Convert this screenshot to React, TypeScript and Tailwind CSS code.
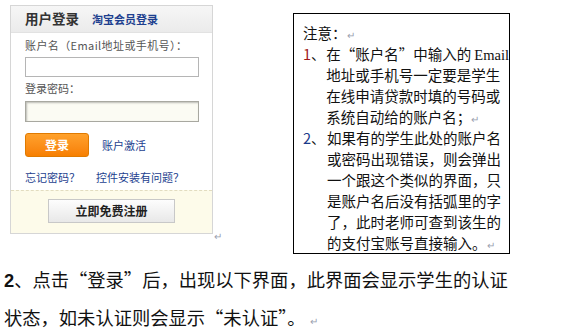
import React from "react";

const cjk = { fontFamily: '"Noto Sans CJK SC", "Noto Sans", sans-serif' };

function Ret({ className = "" }: { className?: string }) {
  return <span className={`text-[10px] leading-none text-gray-400 ${className}`}>↵</span>;
}

function LoginPanel() {
  return (
    <div className="relative w-[203px] h-[229px] border border-[#d6d6d6] bg-white flex flex-col" style={cjk}>
      <div className="h-[27px] flex items-center bg-gradient-to-b from-[#f6f6f6] to-[#ebebeb] border-b border-[#e2e2e2] pl-[14px] gap-[13px]">
        <span className="text-[13.5px] font-bold text-[#333] leading-none">用户登录</span>
        <span className="text-[11px] font-bold text-[#1d3f8f] leading-none">淘宝会员登录</span>
      </div>
      <div className="flex flex-col pl-[14px] pt-[4px]">
        <div className="text-[11px] text-[#555] leading-[16px] tracking-[0.4px]">账户名（Email地址或手机号）：</div>
        <div className="mt-[4px] w-[174px] h-[20px] border border-[#b5b5b5] bg-white" />
        <div className="mt-[3px] text-[11px] text-[#555] leading-[16px]">登录密码：</div>
        <div className="mt-[5px] w-[174px] h-[21px] border border-[#a8a8a0] bg-[#fbfbf3] shadow-[inset_1px_1px_2px_rgba(0,0,0,0.25)]" />
        <div className="mt-[11px] flex items-center">
          <div className="w-[64px] h-[24px] rounded-[3px] border border-[#e07a00] bg-gradient-to-b from-[#ffa12b] to-[#f77f00] flex items-center justify-center">
            <span className="text-[12px] font-bold text-white leading-none">登录</span>
          </div>
          <span className="ml-[13px] text-[11px] text-[#1d3f8f] leading-none">账户激活</span>
        </div>
        <div className="mt-[15px] flex items-center text-[11px] text-[#1d3f8f] leading-none">
          <span>忘记密码？</span>
          <span className="ml-[16px]">控件安装有问题？</span>
        </div>
      </div>
      <div className="mt-[7px] flex-1 border-t border-dashed border-[#e2dcc0] bg-[#fdfbea] flex justify-center pt-[8px]">
        <div className="w-[127px] h-[24px] border border-[#c8c8c8] bg-gradient-to-b from-[#fdfdfd] to-[#e8e8e8] flex items-center justify-center">
          <span className="text-[12px] font-bold text-[#222] leading-none">立即免费注册</span>
        </div>
      </div>
      <Ret className="absolute -right-[10px] -bottom-[8px]" />
    </div>
  );
}

function L({ children }: { children: React.ReactNode }) {
  return <div className="h-[21px] leading-[21px] whitespace-nowrap">{children}</div>;
}

function NoteBox() {
  return (
    <div className="w-[217px] h-[241px] border border-black bg-white pl-[9px] pt-[8px] text-[14.5px] text-[#111]" style={cjk}>
      <L>注意：<Ret /></L>
      <div className="flex">
        <div className="w-[24px]"><L><span className="text-[#a01818]">1</span>、</L></div>
        <div className="flex flex-col">
          <L>在“账户名”中输入的<span style={{ fontFamily: '"Liberation Serif", serif' }} className="ml-[3px] text-[14.5px]">Email</span></L>
          <L>地址或手机号一定要是学生</L>
          <L>在线申请贷款时填的号码或</L>
          <L>系统自动给的账户名；<Ret /></L>
        </div>
      </div>
      <div className="flex">
        <div className="w-[24px]"><L><span className="text-[#1a3a8a]">2</span>、</L></div>
        <div className="flex flex-col">
          <L>如果有的学生此处的账户名</L>
          <L>或密码出现错误，则会弹出</L>
          <L>一个跟这个类似的界面，只</L>
          <L>是账户名后没有括弧里的字</L>
          <L>了，此时老师可查到该生的</L>
          <L>的支付宝账号直接输入。<Ret /></L>
        </div>
      </div>
    </div>
  );
}

export default function App() {
  return (
    <div className="w-[572px] h-[333px] bg-white overflow-hidden">
      <div className="flex">
        <div className="ml-[10px] mt-[5px]">
          <LoginPanel />
        </div>
        <div className="ml-[80px] mt-[13px]">
          <NoteBox />
        </div>
      </div>
      <div className="pl-[4px] mt-[6px] text-[18.3px] leading-[38px] text-[#111]" style={cjk}>
        <div className="h-[38px] whitespace-nowrap"><span className="font-bold" style={{ fontFamily: '"Liberation Sans", sans-serif' }}>2</span>、点击“登录”后，出现以下界面，此界面会显示学生的认证</div>
        <div className="h-[38px] whitespace-nowrap">状态，如未认证则会显示“未认证”。<Ret className="ml-1" /></div>
      </div>
    </div>
  );
}
